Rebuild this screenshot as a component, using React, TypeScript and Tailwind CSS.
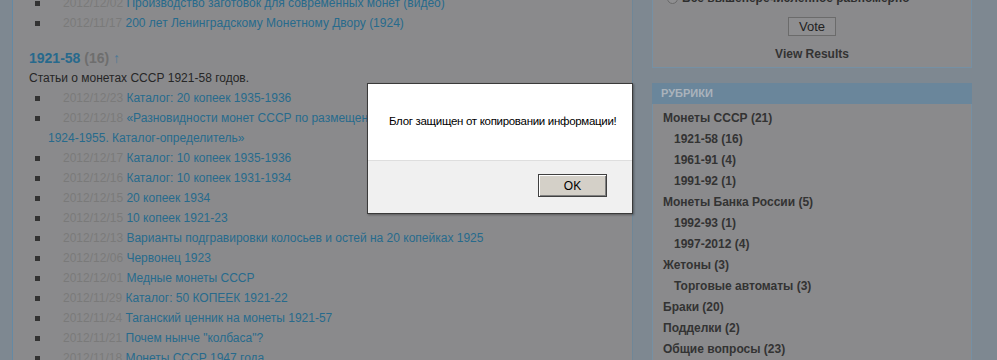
import React from 'react';

type Post = { date: string; title: React.ReactNode };

const topPosts: Post[] = [
  { date: '2012/12/02', title: 'Производство заготовок для современных монет (видео)' },
  { date: '2012/11/17', title: '200 лет Ленинградскому Монетному Двору (1924)' },
];

const posts: Post[] = [
  { date: '2012/12/23', title: 'Каталог: 20 копеек 1935-1936' },
  {
    date: '2012/12/18',
    title: (
      <>
        «Разновидности монет СССР по размещению знаков на штемпелях
        <br />
        1924-1955. Каталог-определитель»
      </>
    ),
  },
  { date: '2012/12/17', title: 'Каталог: 10 копеек 1935-1936' },
  { date: '2012/12/16', title: 'Каталог: 10 копеек 1931-1934' },
  { date: '2012/12/15', title: '20 копеек 1934' },
  { date: '2012/12/15', title: '10 копеек 1921-23' },
  { date: '2012/12/13', title: 'Варианты подгравировки колосьев и остей на 20 копейках 1925' },
  { date: '2012/12/06', title: 'Червонец 1923' },
  { date: '2012/12/01', title: 'Медные монеты СССР' },
  { date: '2012/11/29', title: 'Каталог: 50 КОПЕЕК 1921-22' },
  { date: '2012/11/24', title: 'Таганский ценник на монеты 1921-57' },
  { date: '2012/11/21', title: 'Почем нынче "колбаса"?' },
  { date: '2012/11/18', title: 'Монеты СССР 1947 года' },
];

const rubrics: { name: string; sub?: boolean }[] = [
  { name: 'Монеты СССР (21)' },
  { name: '1921-58 (16)', sub: true },
  { name: '1961-91 (4)', sub: true },
  { name: '1991-92 (1)', sub: true },
  { name: 'Монеты Банка России (5)' },
  { name: '1992-93 (1)', sub: true },
  { name: '1997-2012 (4)', sub: true },
  { name: 'Жетоны (3)' },
  { name: 'Торговые автоматы (3)', sub: true },
  { name: 'Браки (20)' },
  { name: 'Подделки (2)' },
  { name: 'Общие вопросы (23)' },
];

function PostList({ items }: { items: Post[] }) {
  return (
    <ul className="pl-[19px]">
      {items.map((p, i) => (
        <li key={i} className="relative indent-[15px] leading-[20px]">
          <span className="absolute left-[-13px] top-[8px] h-[5px] w-[5px] bg-[#333]" />
          <span className="text-[#7a7a7a]">{p.date}</span>{' '}
          <a className="text-[#276a8c]">{p.title}</a>
        </li>
      ))}
    </ul>
  );
}

export default function App() {
  return (
    <div className="relative h-[360px] w-[997px] overflow-hidden bg-[#7e8891] font-['Liberation_Sans',Arial,sans-serif] text-[12px]">
      <div className="flex h-full">
        <div className="w-[12px] shrink-0" />

        {/* Main column */}
        <div className="w-[621px] shrink-0 border-x border-l-[#6489a4] border-r-[#6f8798] bg-[#8a8a8c] pl-[16px]">
          <div className="-mt-[7px]">
            <PostList items={topPosts} />
            <h2 className="mt-[15px] text-[14px] font-bold leading-[20px]">
              <span className="text-[#27698c]">1921-58</span>{' '}
              <span className="text-[#6e6e6e]">(16)</span>{' '}
              <span className="font-normal text-[#4a7896]">↑</span>
            </h2>
            <p className="leading-[20px] text-[#262626]">Статьи о монетах СССР 1921-58 годов.</p>
            <PostList items={posts} />
          </div>
        </div>

        <div className="w-[19px] shrink-0" />

        {/* Sidebar */}
        <div className="w-[320px] shrink-0">
          <div className="-mt-[12px] border-x border-b border-[#7590a4] bg-[#8a8a8c] pb-[3px] text-center">
            <div className="flex items-center gap-[4px] pl-[14px] text-left font-bold leading-[20px] text-[#2e2e2e]">
              <span className="h-[11px] w-[11px] rounded-full border border-[#6a6a6a] bg-[#8f8f91]" />
              Все вышеперечисленное равномерно
            </div>
            <button className="mt-[9px] h-[19px] w-[48px] border border-[#6b6b6b] bg-[#8e8e90] text-[13px] leading-[17px] text-[#222]">
              Vote
            </button>
            <div className="mt-[8px] font-bold leading-[20px] text-[#333]">View Results</div>
          </div>

          <div className="mt-[15px] border-x border-b border-[#7590a4] bg-[#8a8a8c]">
            <div className="-mx-px h-[21px] bg-[#6a869b] pl-[9px] text-[11px] font-bold leading-[21px] text-[#aab3bb]">
              РУБРИКИ
            </div>
            <ul className="pt-[4px] pl-[10px]">
              {rubrics.map((r) => (
                <li
                  key={r.name}
                  className={`font-bold leading-[21px] text-[#333] ${r.sub ? 'pl-[11px]' : ''}`}
                >
                  {r.name}
                </li>
              ))}
            </ul>
          </div>
        </div>
      </div>

      {/* Copy-protection dialog */}
      <div className="absolute left-[367px] top-[83px] flex h-[131px] w-[266px] flex-col border border-[#3a3a3a] bg-white shadow-[1px_1px_2px_rgba(0,0,0,0.35)]">
        <div className="flex h-[76px] items-center whitespace-nowrap pl-[21px] text-[11.5px] tracking-[-0.3px] text-black">
          Блог защищен от копировании информации!
        </div>
        <div className="flex flex-1 justify-end border-t border-[#dedede] bg-[#f0f0f0] pr-[25px] pt-[13px]">
          <button className="h-[23px] w-[69px] border border-[#404040] bg-[#d4d0c8] text-[12px] text-black shadow-[inset_1px_1px_0_#fff,inset_-1px_-1px_0_#808080]">
            OK
          </button>
        </div>
      </div>
    </div>
  );
}
